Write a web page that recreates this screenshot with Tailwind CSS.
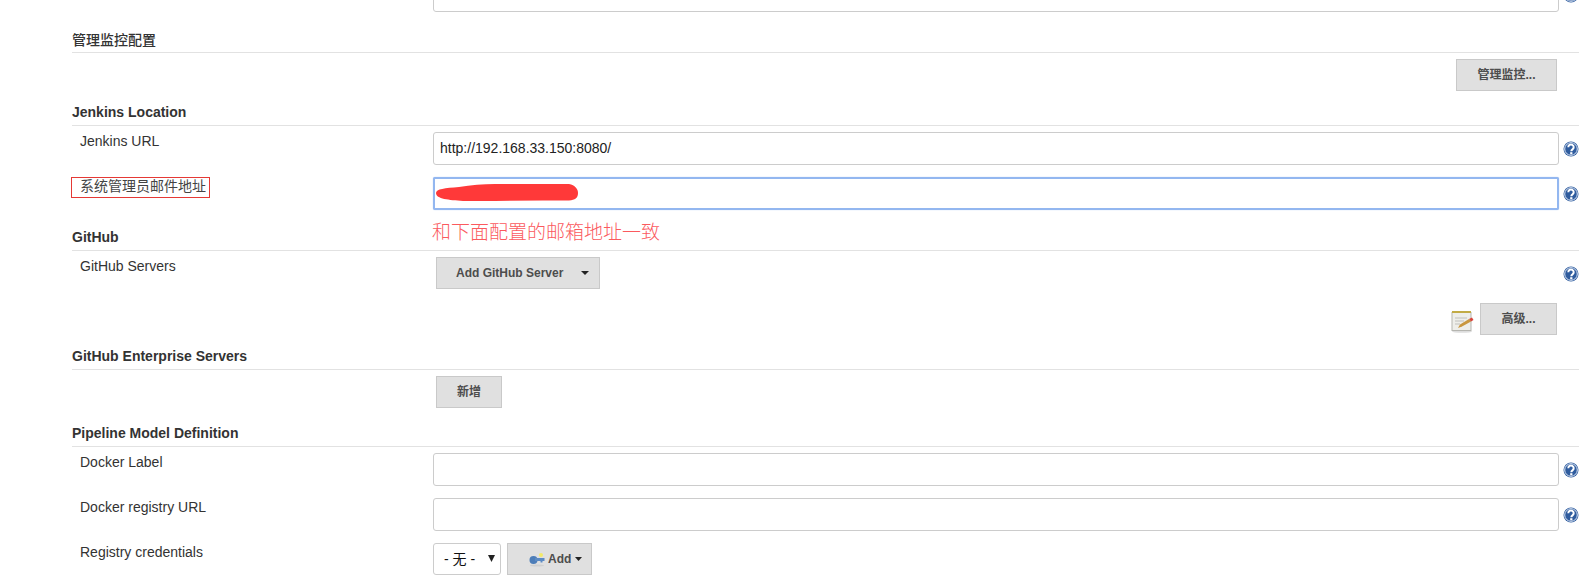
<!DOCTYPE html>
<html lang="zh-CN">
<head>
<meta charset="UTF-8">
<title>Jenkins 系统配置</title>
<script src="https://cdn.jsdelivr.net/npm/@tailwindcss/browser@4"></script>
</head>
<body class="bg-white h-[587px] overflow-hidden font-['Liberation_Sans','Noto_Sans_CJK_SC',sans-serif] text-[14px] text-[#333]">
<svg class="hidden">
  <defs>
    <symbol id="help" viewBox="0 0 16 16">
      <circle cx="8" cy="8" r="7.500" fill="#2f5c9e"/>
      <circle cx="8" cy="8" r="6.300" fill="none" stroke="#dfe8f6" stroke-width="1"/>
      <path d="M5.300 6.200a2.700 2.700 0 1 1 4.200 2.200c-.9.600-1.200 1-1.200 1.900" fill="none" stroke="#fff" stroke-width="2"/>
      <rect x="7.200" y="11.200" width="2.200" height="2.100" fill="#fff"/>
    </symbol>
  </defs>
</svg>

<main class="pl-[72px] pr-[11px]">
  <!-- top of the section cut off by the screenshot -->
  <div class="flex h-[12px] overflow-hidden">
    <div class="w-[361px]"></div>
    <input class="flex-1 h-[33px] -mt-[21px] border border-[#ccc] rounded-[3px] bg-white">
    <svg class="w-4 h-4 ml-[4px] -mt-[13px]"><use href="#help"/></svg>
  </div>

  <h3 class="h-[41px] flex items-end pb-[2px] border-b border-[#e2e2e2] font-medium leading-[20px] text-[14px]">管理监控配置</h3>
  <div class="flex justify-end pr-[22px] mt-[6px]">
    <button class="w-[101px] h-[32px] bg-[#e0e0e0] border border-[#c9c9c9] text-[#4d4d4d] text-[12px] font-bold">管理监控...</button>
  </div>

  <h3 class="h-[35px] flex items-end pb-[3px] border-b border-[#e2e2e2] font-bold leading-[20px]">Jenkins Location</h3>
  <div class="flex mt-[6px]">
    <label class="w-[361px] pl-[8px] leading-[18px]">Jenkins URL</label>
    <input class="flex-1 h-[33px] border border-[#ccc] rounded-[3px] px-[6px] pb-[2px] text-[14px] text-[#222]" value="http://192.168.33.150:8080/">
    <svg class="w-4 h-4 ml-[4px] mt-[9px]"><use href="#help"/></svg>
  </div>
  <div class="flex mt-[12px]">
    <div class="w-[361px]">
      <label class="block w-[139px] h-[21px] -ml-px pl-[8px] border border-[#e53935] leading-[16px] text-[#444] text-[14px]">系统管理员邮件地址</label>
    </div>
    <div class="relative flex-1">
      <input class="block w-full h-[33px] border-2 border-[#93b7f0] rounded-[2px] bg-white shadow-[0_0_1px_#93b7f0]">
      <svg class="absolute left-[2px] top-[6px]" width="144" height="19" viewBox="0 0 144 19">
        <path d="M1 10C1 6 10 5 24 4C36 2 48 1 60 1L134 1C140 2 143 6 143 10C143 15 140 17 134 17.500L108 17.500L60 18L28 18C14 17 1 16 1 10Z" fill="#ff3939"/>
      </svg>
    </div>
    <svg class="w-4 h-4 ml-[4px] mt-[9px]"><use href="#help"/></svg>
  </div>

  <h3 class="relative h-[41px] flex items-end pb-[3px] border-b border-[#e2e2e2] font-bold leading-[20px]">
    GitHub
    <span class="absolute left-[360px] top-[10px] text-[19px] leading-[26px] font-light text-[#fb5a5e] font-['Liberation_Serif','Noto_Sans_CJK_SC',serif]">和下面配置的邮箱地址一致</span>
  </h3>
  <div class="flex mt-[6px]">
    <label class="w-[364px] pl-[8px] leading-[18px]">GitHub Servers</label>
    <div class="flex-1">
      <button class="flex items-center w-[164px] h-[32px] pl-[19px] bg-[#e0e0e0] border border-[#c9c9c9] text-[#4d4d4d] text-[12px] font-bold">
        Add GitHub Server
        <svg class="ml-[18px]" width="8" height="4" viewBox="0 0 8 4"><path d="M0 0H8L4 4Z" fill="#222"/></svg>
      </button>
    </div>
    <svg class="w-4 h-4 mt-[9px]"><use href="#help"/></svg>
  </div>
  <div class="flex justify-end items-center pr-[22px] mt-[14px]">
    <svg class="mr-[6px] mt-[4px]" width="23" height="23" viewBox="0 0 23 23">
      <ellipse cx="11" cy="21.500" rx="10" ry="1.300" fill="#ddd"/>
      <rect x="1" y="2.500" width="19" height="18" fill="#eeeeea" stroke="#b5b5b0"/>
      <rect x="1" y="1" width="19" height="2" fill="#c2ab45"/>
      <path d="M4 8H16M4 11H13M4 14H9" stroke="#cfcfcb" stroke-width="1.300"/>
      <path d="M7 18L9 14.500L18 9L20 11.500L11 16.500Z" fill="#c9973f"/>
      <path d="M18 9L20 11.500L22.500 10L21 7.500Z" fill="#d8433a"/>
    </svg>
    <button class="w-[77px] h-[32px] bg-[#e0e0e0] border border-[#c9c9c9] text-[#4d4d4d] text-[12px] font-bold">高级...</button>
  </div>

  <h3 class="h-[35px] flex items-end pb-[3px] border-b border-[#e2e2e2] font-bold leading-[20px]">GitHub Enterprise Servers</h3>
  <div class="pl-[364px] mt-[6px]">
    <button class="w-[66px] h-[32px] bg-[#e0e0e0] border border-[#c9c9c9] text-[#4d4d4d] text-[12px] font-bold">新增</button>
  </div>

  <h3 class="h-[39px] flex items-end pb-[3px] border-b border-[#e2e2e2] font-bold leading-[20px]">Pipeline Model Definition</h3>
  <div class="flex mt-[6px]">
    <label class="w-[361px] pl-[8px] leading-[18px]">Docker Label</label>
    <input class="flex-1 h-[33px] border border-[#ccc] rounded-[3px]">
    <svg class="w-4 h-4 ml-[4px] mt-[9px]"><use href="#help"/></svg>
  </div>
  <div class="flex mt-[12px]">
    <label class="w-[361px] pl-[8px] leading-[18px]">Docker registry URL</label>
    <input class="flex-1 h-[33px] border border-[#ccc] rounded-[3px]">
    <svg class="w-4 h-4 ml-[4px] mt-[9px]"><use href="#help"/></svg>
  </div>
  <div class="flex mt-[12px]">
    <label class="w-[361px] pl-[8px] leading-[18px]">Registry credentials</label>
    <div class="relative w-[68px] h-[32px]">
      <select class="appearance-none w-full h-full border border-[#ccc] rounded-[3px] pl-[10px] bg-white text-[14px] text-[#111]">
        <option>- 无 -</option>
      </select>
      <svg class="absolute left-[55px] top-[12px]" width="7" height="7" viewBox="0 0 7 7"><path d="M0 0H7L3.500 7Z" fill="#222"/></svg>
    </div>
    <button class="flex items-center w-[85px] h-[32px] ml-[6px] pl-[21px] bg-[#e0e0e0] border border-[#c9c9c9] text-[#4d4d4d] text-[12px] font-bold">
      <svg class="mr-[3px]" width="16" height="16" viewBox="0 0 16 16">
        <ellipse cx="8" cy="14.500" rx="7" ry="1" fill="#cfcfcf"/>
        <circle cx="4.500" cy="9" r="4" fill="#4d7db8"/>
        <path d="M6 7H15.500V10H13.500V11.500H11.500V10H6Z" fill="#5b8ac4"/>
        <circle cx="12" cy="4" r="2" fill="#f3ea6a"/>
      </svg>
      Add
      <svg class="ml-[4px]" width="7" height="4" viewBox="0 0 7 4"><path d="M0 0H7L3.500 4Z" fill="#222"/></svg>
    </button>
  </div>
</main>
</body>
</html>
